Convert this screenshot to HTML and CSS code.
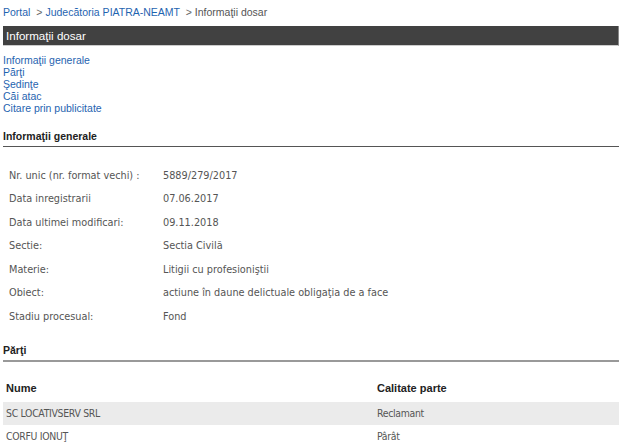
FILE: index.html
```html
<!DOCTYPE html>
<html lang="ro">
<head>
<meta charset="utf-8">
<title>Informaţii dosar</title>
<link rel="stylesheet" href="styles.css">
</head>
<body>
<div class="breadcrumb"><a href="#">Portal</a> <span class="sep">&gt;</span> <a href="#">Judecătoria PIATRA-NEAMT</a> <span class="sep">&gt;</span> <span class="current">Informaţii dosar</span></div>
<div class="titlebar">Informaţii dosar</div>
<ul class="toc">
<li><a href="#">Informaţii generale</a></li>
<li><a href="#">Părţi</a></li>
<li><a href="#">Şedinţe</a></li>
<li><a href="#">Căi atac</a></li>
<li><a href="#">Citare prin publicitate</a></li>
</ul>
<h2 class="section section-gen">Informaţii generale</h2>
<table class="info">
<tr><td class="lbl">Nr. unic (nr. format vechi) :</td><td>5889/279/2017</td></tr>
<tr><td class="lbl">Data inregistrarii</td><td>07.06.2017</td></tr>
<tr><td class="lbl">Data ultimei modificari:</td><td>09.11.2018</td></tr>
<tr><td class="lbl">Sectie:</td><td>Sectia Civilă</td></tr>
<tr><td class="lbl">Materie:</td><td>Litigii cu profesioniştii</td></tr>
<tr><td class="lbl">Obiect:</td><td>actiune în daune delictuale obligaţia de a face</td></tr>
<tr><td class="lbl">Stadiu procesual:</td><td>Fond</td></tr>
</table>
<h2 class="section section-parti">Părţi</h2>
<table class="parti">
<thead><tr><th class="c1">Nume</th><th>Calitate parte</th></tr></thead>
<tbody>
<tr class="odd"><td>SC LOCATIVSERV SRL</td><td>Reclamant</td></tr>
<tr><td>CORFU IONUŢ</td><td>Pârât</td></tr>
</tbody>
</table>
</body>
</html>
```
FILE: styles.css
```css
html, body { margin: 0; padding: 0; background: #fff; }
body {
  padding: 4px 3px 0 3px;
  font-family: "Liberation Sans", Arial, sans-serif;
  font-size: 10.5px;
  color: #333;
}
a { color: #1f64b0; text-decoration: none; }
.breadcrumb { height: 16px; line-height: 16px; font-size: 10.5px; color: #555; }
.breadcrumb .sep { color: #666; margin-left: 3px; }
.breadcrumb .current { color: #555; }
.titlebar {
  margin-top: 6px;
  height: 19px;
  line-height: 19px;
  background: #414141;
  color: #fff;
  font-size: 11.6px;
  padding-left: 3px;
  border-right: 1px solid #888;
  border-bottom: 1px solid #ccc;
}
.toc { list-style: none; margin: 8px 0 0 0; padding: 0; }
.toc li { line-height: 12px; height: 12px; font-size: 10.5px; }
.section {
  margin: 14px 0 0 0;
  font-size: 10.5px;
  font-weight: bold;
  color: #222;
  line-height: 16px;
}
.section-gen { padding-bottom: 2px; border-bottom: 1px solid #555; }
.section-parti { padding-bottom: 2px; border-bottom: 2px solid #999; margin-top: 13px; }
.info {
  border-collapse: collapse;
  margin-top: 17px;
  font-family: "DejaVu Sans Condensed", "DejaVu Sans", sans-serif;
  font-size: 10.8px;
  color: #555;
}
.info td { padding: 0; height: 23.5px; line-height: 14px; vertical-align: middle; }
.info td.lbl { width: 154px; padding-left: 6px; }
.parti {
  width: 100%;
  border-collapse: collapse;
  margin-top: 16px;
  font-family: "DejaVu Sans Condensed", "DejaVu Sans", sans-serif;
  font-size: 10.4px;
  color: #555;
}
.parti th {
  text-align: left;
  font-family: "Liberation Sans", Arial, sans-serif;
  font-size: 11px;
  color: #222;
  height: 24px;
  line-height: 20px;
  vertical-align: top;
  padding: 0 0 0 3px;
}
.parti th.c1 { width: 368px; }
.parti td { height: 23px; padding: 0 0 0 3px; letter-spacing: -0.3px; }
.parti tr.odd td { background: #ebebeb; }
```
